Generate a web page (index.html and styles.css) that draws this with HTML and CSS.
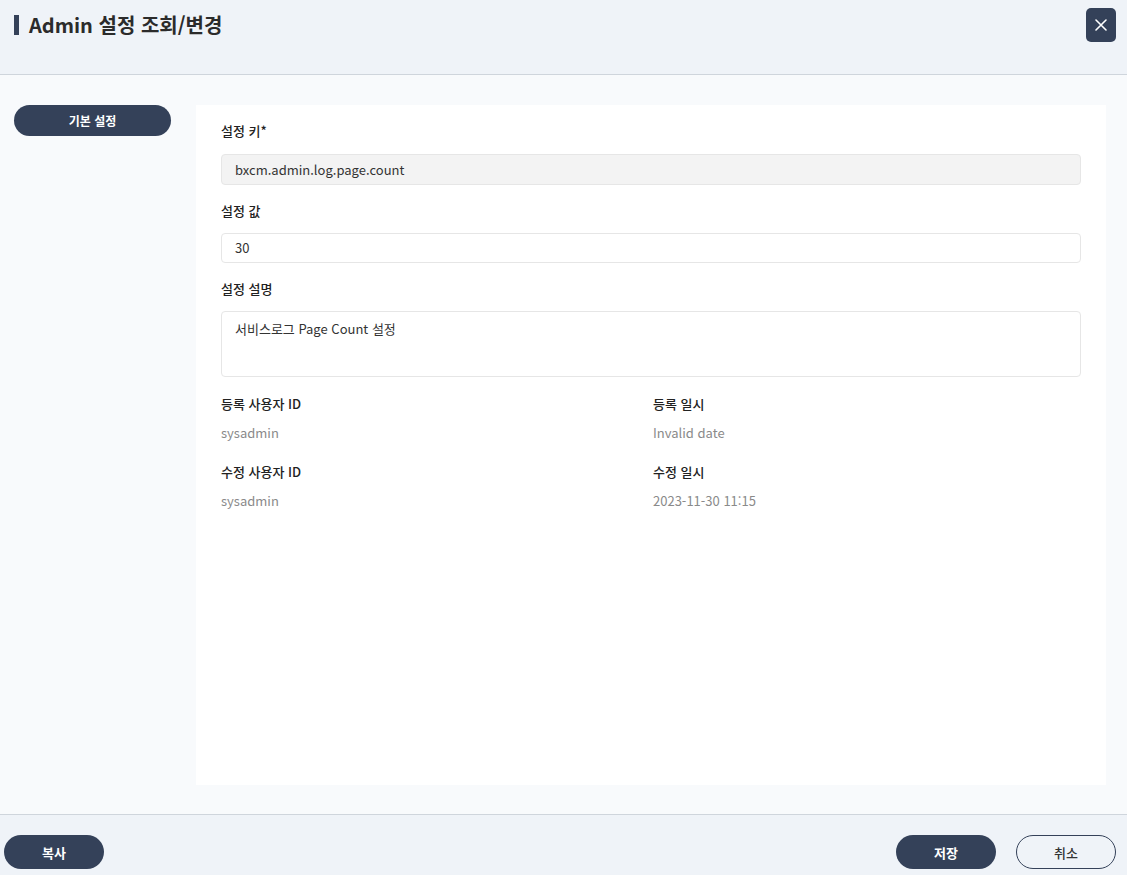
FILE: index.html
```html
<!DOCTYPE html>
<html lang="ko">
<head>
<meta charset="utf-8">
<title>Admin 설정 조회/변경</title>
<link rel="stylesheet" href="styles.css">
</head>
<body>
<div class="page">
  <header class="header">
    <h1 class="title"><span class="title-bar"></span>Admin 설정 조회/변경</h1>
    <button class="close-btn" type="button" aria-label="닫기">
      <svg width="12" height="12" viewBox="0 0 12 12"><path d="M1 1 L11 11 M11 1 L1 11" stroke="#fff" stroke-width="1.6" stroke-linecap="round" fill="none"/></svg>
    </button>
  </header>
  <main class="main">
    <nav class="side">
      <button class="tab" type="button">기본 설정</button>
    </nav>
    <section class="panel">
      <div class="field">
        <div class="label">설정 키*</div>
        <div class="input readonly">bxcm.admin.log.page.count</div>
      </div>
      <div class="field">
        <div class="label">설정 값</div>
        <div class="input">30</div>
      </div>
      <div class="field field-last">
        <div class="label">설정 설명</div>
        <div class="input textarea">서비스로그 Page Count 설정</div>
      </div>
      <div class="info-grid">
        <div class="info">
          <div class="label">등록 사용자 ID</div>
          <div class="value">sysadmin</div>
        </div>
        <div class="info">
          <div class="label">등록 일시</div>
          <div class="value">Invalid date</div>
        </div>
        <div class="info">
          <div class="label">수정 사용자 ID</div>
          <div class="value">sysadmin</div>
        </div>
        <div class="info">
          <div class="label">수정 일시</div>
          <div class="value">2023-11-30 11:15</div>
        </div>
      </div>
    </section>
  </main>
  <footer class="footer">
    <button class="btn btn-dark" type="button">복사</button>
    <div class="footer-right">
      <button class="btn btn-dark" type="button">저장</button>
      <button class="btn btn-outline" type="button">취소</button>
    </div>
  </footer>
</div>
</body>
</html>
```

FILE: styles.css
```css
* { box-sizing: border-box; }
html, body { margin: 0; padding: 0; }
body {
  font-family: "Noto Sans CJK KR", "Noto Sans", sans-serif;
  color: #333;
  background: #f8fafc;
}
.page {
  display: flex;
  flex-direction: column;
  height: 100vh;
}
.header {
  height: 75px;
  flex: none;
  background: #eff3f8;
  border-bottom: 1px solid #cfd5dc;
  display: flex;
  justify-content: space-between;
  align-items: flex-start;
  padding: 8px 11px 0 14px;
}
.title {
  margin: 7px 0 0;
  display: flex;
  align-items: center;
  gap: 10px;
  font-size: 20px;
  line-height: 20px;
  font-weight: 700;
  color: #2b2b2b;
}
.title-bar {
  width: 5px;
  height: 20px;
  background: #344159;
}
.close-btn {
  width: 30px;
  height: 34px;
  border: none;
  border-radius: 5px;
  background: #344159;
  padding: 0;
  display: flex;
  align-items: center;
  justify-content: center;
  cursor: pointer;
}
.main {
  flex: 1;
  display: flex;
  padding: 30px 21px 29px 14px;
  gap: 25px;
  background: #f8fafc;
}
.side { width: 157px; flex: none; }
.tab {
  width: 157px;
  height: 31px;
  border: none;
  border-radius: 16px;
  background: #344159;
  color: #fff;
  font-family: inherit;
  font-size: 12px;
  font-weight: 700;
  cursor: pointer;
}
.panel {
  flex: 1;
  background: #fff;
  padding: 16px 25px 20px;
}
.field { margin-bottom: 16px; }
.field-last { margin-bottom: 17px; }
.label {
  font-size: 13px;
  line-height: 20px;
  font-weight: 500;
  color: #222;
  margin-bottom: 12px;
}
.input {
  height: 30px;
  border: 1px solid #e6e6e6;
  border-radius: 4px;
  background: #fff;
  padding: 0 13px;
  font-size: 13px;
  line-height: 28px;
  color: #333;
}
.input.readonly {
  height: 31px;
  line-height: 29px;
  background: #f3f3f3;
}
.field:first-child .label { margin-bottom: 13px; }
.input.textarea {
  height: 66px;
  line-height: 20px;
  padding-top: 7px;
}
.info-grid {
  display: grid;
  grid-template-columns: 1fr 1fr;
  column-gap: 4px;
  row-gap: 19px;
}
.info .label { margin-bottom: 9px; }
.value {
  font-size: 13px;
  line-height: 20px;
  color: #8a8a8a;
}
.footer {
  height: 61px;
  flex: none;
  background: #eff3f8;
  border-top: 1px solid #cfd5dc;
  display: flex;
  justify-content: space-between;
  align-items: flex-start;
  padding: 20px 11px 0 4px;
}
.footer-right { display: flex; gap: 20px; }
.btn {
  width: 100px;
  height: 34px;
  border-radius: 17px;
  font-family: inherit;
  font-size: 13px;
  font-weight: 700;
  cursor: pointer;
}
.btn-dark {
  background: #344159;
  color: #fff;
  border: none;
}
.btn-outline {
  background: transparent;
  color: #333;
  border: 1px solid #344159;
  font-weight: 500;
}
```
